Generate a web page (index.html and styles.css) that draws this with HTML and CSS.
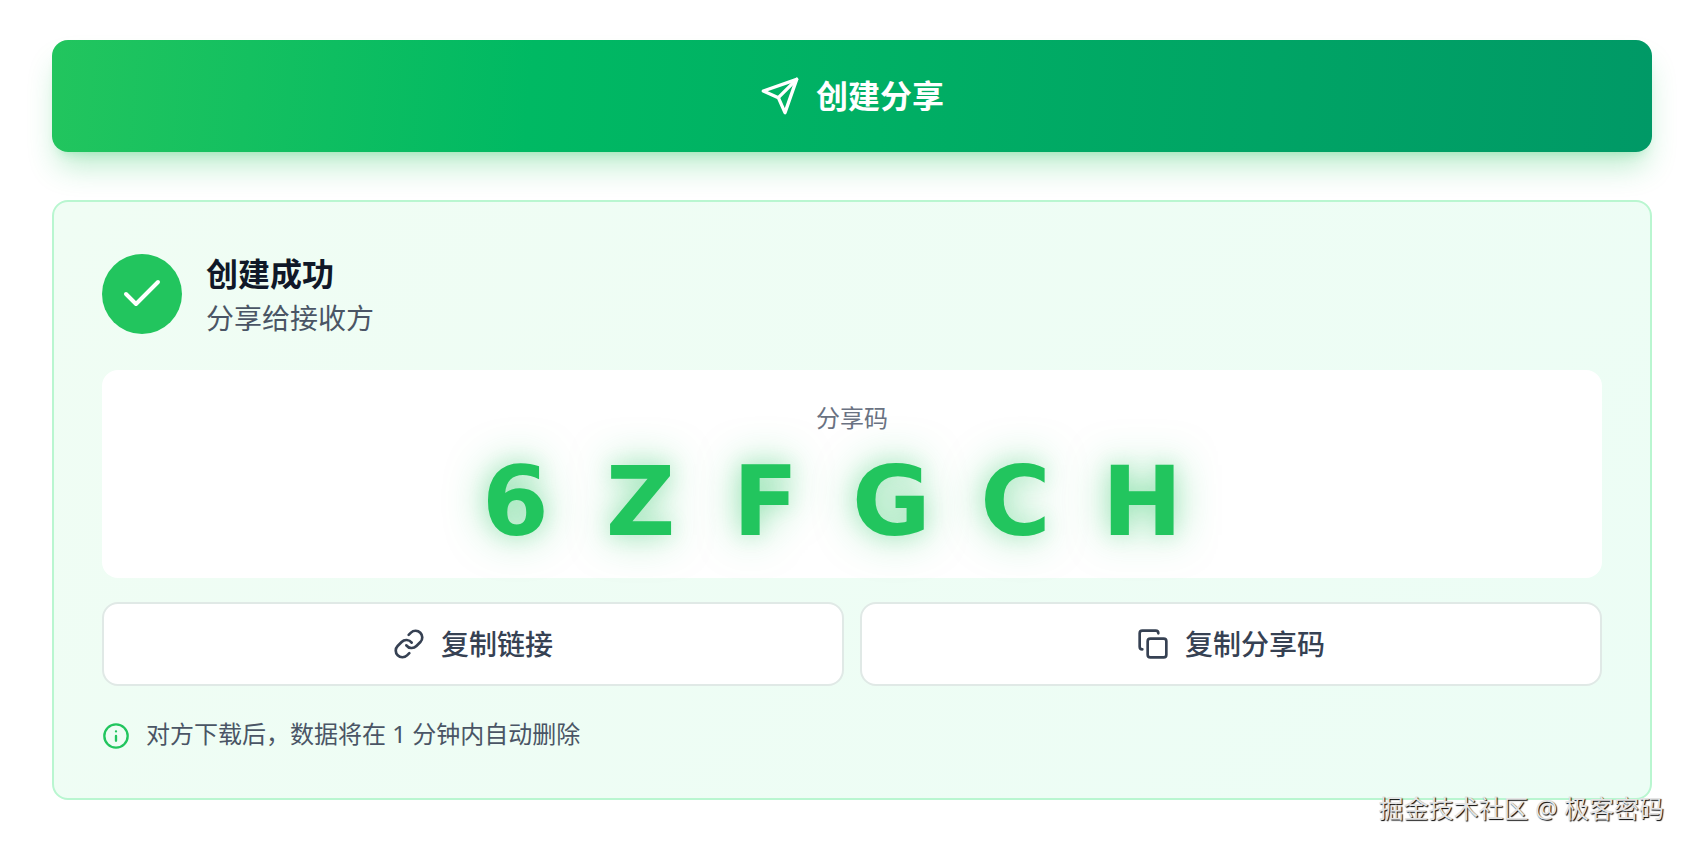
FILE: index.html
```html
<!DOCTYPE html>
<html lang="zh-CN">
<head>
<meta charset="utf-8">
<meta name="viewport" content="width=device-width, initial-scale=1">
<title>创建分享</title>
<link rel="stylesheet" href="styles.css">
</head>
<body>
<main class="page">
  <button class="create" type="button">
    <svg class="icon icon-large" viewBox="0 0 24 24" aria-hidden="true"><path d="M22 2 11 13"/><path d="M22 2 15 22 11 13 2 9z"/></svg>
    <span>创建分享</span>
  </button>
  <section class="card" aria-labelledby="result-title">
    <header class="result">
      <span class="badge"><svg class="icon icon-check" viewBox="0 0 24 24" aria-hidden="true"><path d="M20 6 9 17l-5-5"/></svg></span>
      <div>
        <h2 class="result-title" id="result-title">创建成功</h2>
        <p class="result-text">分享给接收方</p>
      </div>
    </header>
    <div class="code-box">
      <p class="code-label">分享码</p>
      <p class="code"><span>6</span><span>Z</span><span>F</span><span>G</span><span>C</span><span>H</span></p>
    </div>
    <div class="actions">
      <button class="action" type="button">
        <svg class="icon" viewBox="0 0 24 24" aria-hidden="true"><path d="M10 13a5 5 0 0 0 7.54.54l3-3a5 5 0 0 0-7.07-7.07l-1.72 1.71"/><path d="M14 11a5 5 0 0 0-7.54-.54l-3 3a5 5 0 0 0 7.07 7.07l1.71-1.71"/></svg>
        <span>复制链接</span>
      </button>
      <button class="action" type="button">
        <svg class="icon" viewBox="0 0 24 24" aria-hidden="true"><rect x="8" y="8" width="14" height="14" rx="2"/><path d="M4 16c-1.1 0-2-.9-2-2V4c0-1.1.9-2 2-2h10c1.1 0 2 .9 2 2"/></svg>
        <span>复制分享码</span>
      </button>
    </div>
    <p class="note">
      <svg class="icon icon-note" viewBox="0 0 24 24" aria-hidden="true"><circle cx="12" cy="12" r="10"/><path d="M12 16v-4M12 8h.01"/></svg>
      <span>对方下载后，数据将在 1 分钟内自动删除</span>
    </p>
  </section>
  <p class="watermark">掘金技术社区 @ 极客密码</p>
</main>
</body>
</html>
```
FILE: styles.css
```css
* { box-sizing: border-box; }

body {
  margin: 0;
  background: #fff;
  font-family: "Noto Sans", "Noto Sans CJK SC", sans-serif;
}

h2, p { margin: 0; }

button {
  font-family: inherit;
  cursor: pointer;
}

.page {
  position: relative;
  display: flex;
  flex-direction: column;
  gap: 48px;
  padding: 40px 36px 46px 52px;
}

.icon {
  flex: none;
  width: 32px;
  height: 32px;
  fill: none;
  stroke: currentColor;
  stroke-width: 2;
  stroke-linecap: round;
  stroke-linejoin: round;
}

.icon-large {
  width: 40px;
  height: 40px;
}

.icon-check {
  width: 48px;
  height: 48px;
}

.create {
  display: flex;
  align-items: center;
  justify-content: center;
  gap: 16px;
  padding: 32px;
  border: 0;
  border-radius: 16px;
  background: linear-gradient(95deg, #22c55e 0%, #00b963 30%, #009966 100%);
  box-shadow:
    0 20px 30px -6px rgb(34 197 94 / 30%),
    0 8px 12px -8px rgb(34 197 94 / 30%);
  color: #fff;
  font-size: 32px;
  line-height: 48px;
  font-weight: 700;
}

.card {
  padding: 48px;
  border: 2px solid #b9f6d0;
  border-radius: 16px;
  background: linear-gradient(135deg, #f0fdf4, #ecfdf5);
}

.result {
  display: flex;
  align-items: center;
  gap: 24px;
  margin-bottom: 32px;
}

.badge {
  display: grid;
  place-items: center;
  width: 80px;
  height: 80px;
  border-radius: 50%;
  background: #22c55e;
  color: #fff;
}

.result-title {
  color: #101828;
  font-size: 32px;
  line-height: 48px;
  font-weight: 700;
}

.result-text {
  color: #4a5565;
  font-size: 28px;
  line-height: 40px;
}

.code-box {
  padding: 32px 32px 28px;
  border-radius: 16px;
  background: #fff;
  text-align: center;
}

.code-label {
  margin-bottom: 20px;
  color: #6a7282;
  font-size: 24px;
  line-height: 32px;
}

.code {
  display: grid;
  grid-template-columns: repeat(6, 77px);
  justify-content: center;
  gap: 48px;
  padding-right: 48px;
  color: #22c55e;
  font-family: "DejaVu Sans", sans-serif;
  font-size: 96px;
  line-height: 96px;
  font-weight: 700;
  text-shadow: 0 0 40px rgb(34 197 94 / 50%), 0 0 20px rgb(34 197 94 / 20%);
}

.actions {
  display: grid;
  grid-template-columns: 1fr 1fr;
  gap: 16px;
  margin: 24px 0 32px;
}

.action {
  display: flex;
  align-items: center;
  justify-content: center;
  gap: 16px;
  padding: 20px;
  border: 2px solid #e0e9e6;
  border-radius: 16px;
  background: #fff;
  color: #364153;
  font-size: 28px;
  line-height: 40px;
  font-weight: 500;
}

.note {
  display: flex;
  align-items: flex-start;
  gap: 16px;
  color: #4a5565;
  font-size: 24px;
  line-height: 32px;
}

.icon-note {
  width: 28px;
  height: 28px;
  margin-top: 4px;
  color: #22c55e;
}

.watermark {
  position: absolute;
  right: 24px;
  bottom: 20px;
  color: #e4e4e4;
  font-size: 25px;
  line-height: 36px;
  text-shadow: 1px 1px 1px #000;
}
```
